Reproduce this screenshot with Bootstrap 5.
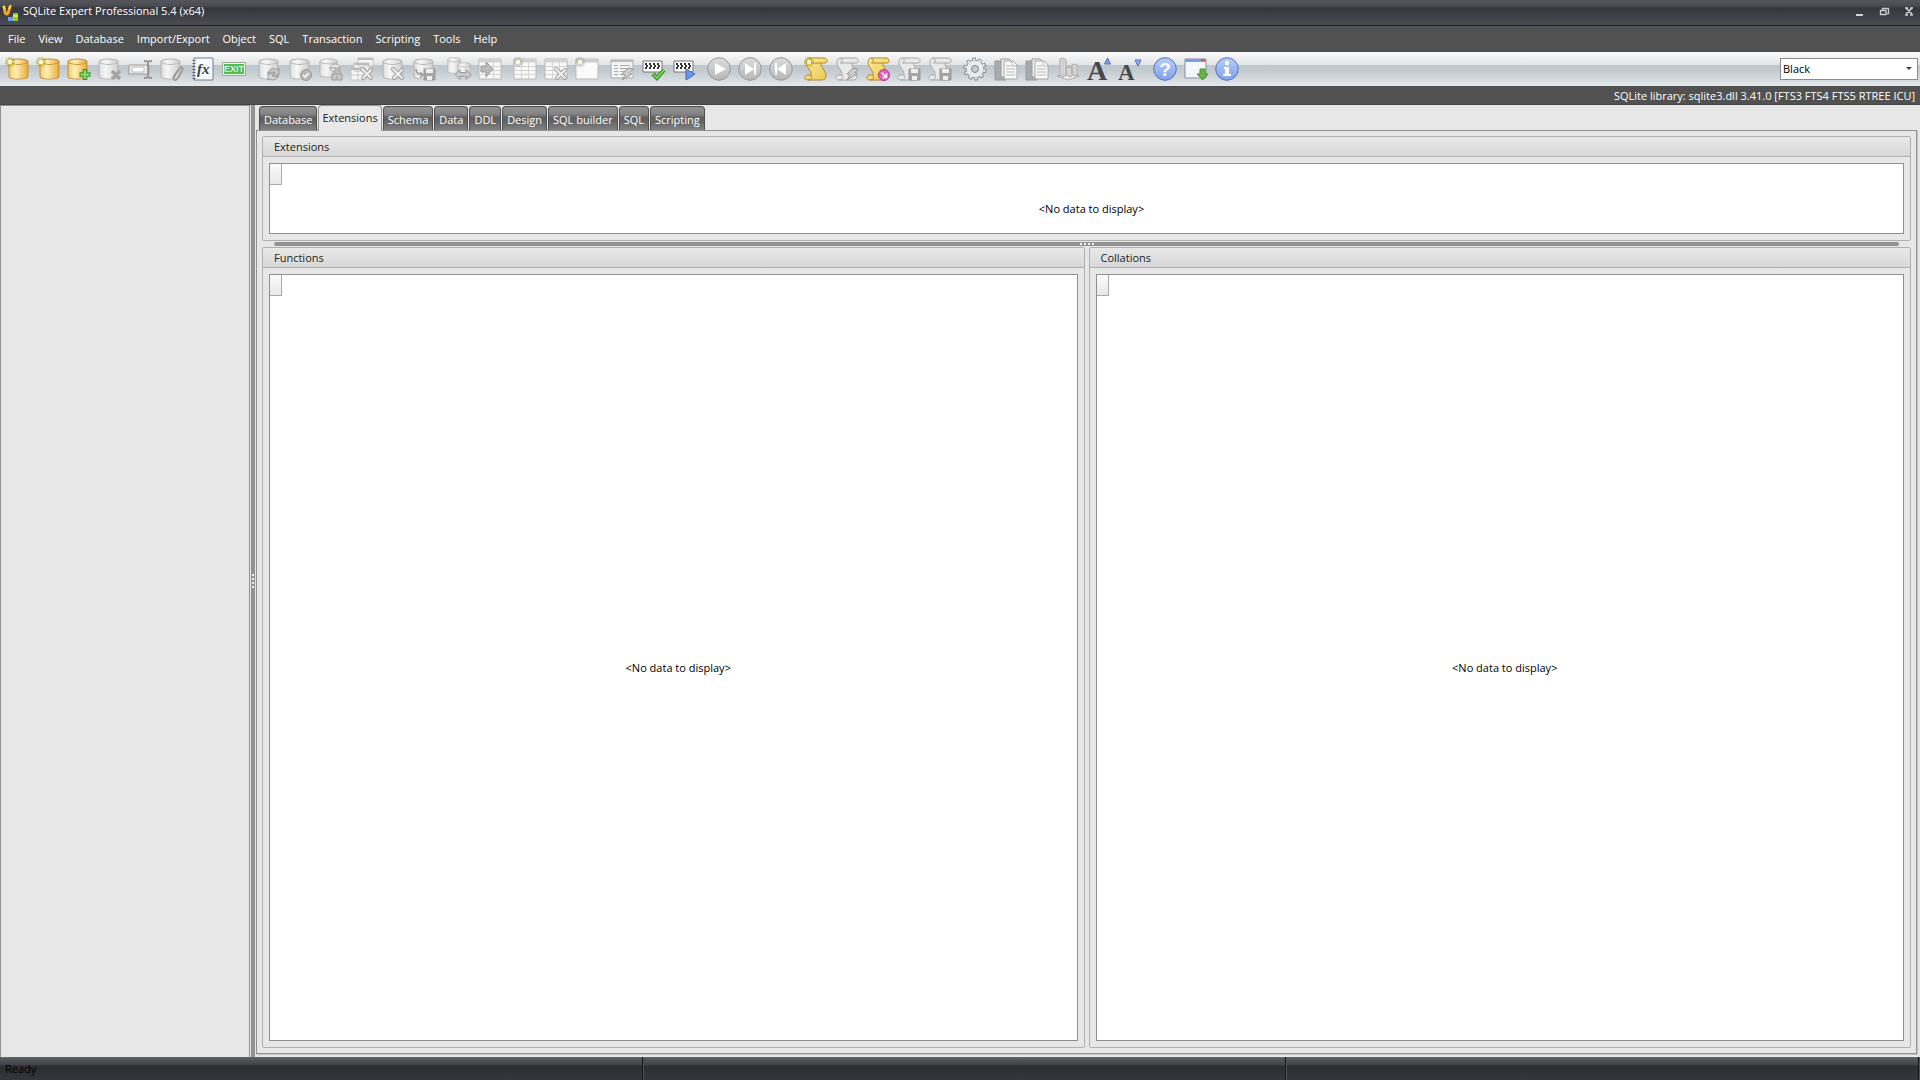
<!DOCTYPE html>
<html lang="en">
<head>
<meta charset="utf-8">
<meta name="viewport" content="width=device-width, initial-scale=1">
<title>SQLite Expert Professional 5.4 (x64)</title>
<link href="https://cdn.jsdelivr.net/npm/bootstrap@5.3.0/dist/css/bootstrap.min.css" rel="stylesheet">
<style>
body{font-family:"Open Sans","Noto Sans",sans-serif;font-size:11px;line-height:16px;color:#000;background:#e7e7e7}
button,select{font:inherit;color:inherit}
.plain-btn{background:none;border:0;padding:0}
.title-bar{height:26px;background:linear-gradient(#53555b 0,#4d4e54 20%,#36373c 32%,#42434a 70%,#4c4d55 94%,#232323 96%);color:#fff;padding:0 5px 0 2px}
.title-bar h1{font-size:11px;line-height:16px;font-weight:400;margin-left:3px}
.window-controls{gap:13px}
.menu-bar{height:26px;background:#515151;padding-left:8px;gap:13px}
.menu-bar a{color:#fff;text-decoration:none}
.tool-bar{height:34px;background:linear-gradient(#fafafa 0,#e2e5e7 37%,#bec5cc 38%,#c7cdd1 60%,#e4e9ec 100%);padding:0 2px 0 5px}
.tool-groups{gap:11px}
.tool-group{gap:7px}
.tool-group svg{width:24px;height:24px;display:block;overflow:visible}
.theme-select{width:138px;height:22px;border:1px solid #8d8d8d;border-radius:0;background:#fff;padding:0 2px;appearance:none;color:#000}
.theme-arrow{right:6px;top:9px;pointer-events:none}
.lib-bar{height:19px;background:#515151;border-bottom:1px solid #444;color:#fff;padding:2px 5px 0 0}
.main-area{min-height:0}
.side-pane{width:250px;border:1px solid #929292;border-bottom:0;background:#e7e7e7}
.split-v{width:4px;margin:0 1px;background:#929292;gap:2px}
.split-h{height:4px;margin:1px 12px;background:#929292;border-radius:2px;gap:2px}
.dot{width:2px;height:2px;background:#eee}
.tab-strip{padding:1px 0 0 3px;height:25px;gap:1px}
.doc-tab{height:25px;border:1px solid #4f4f4f;border-bottom:0;border-radius:4px 4px 0 0;color:#fff;background:linear-gradient(#929292 0,#838383 30%,#5e5e5e 45%,#686868 65%,#858585 100%);padding:2px 4px 0}
.doc-tab.active{height:26px;margin-top:-1px;background:#e9e9e9;color:#222;border-color:#929292;padding:0 3px 1px;position:relative;z-index:1}
.page-frame{border:1px solid #929292;padding:5px;margin-right:3px;margin-bottom:3px;box-shadow:1px 1px #c4c4c4}
.group-row{gap:4px}
.group-panel{border:1px solid #b0b0b0;border-radius:2px}
.group-panel h2{height:20px;margin:0;padding:1px 11px 0;font-size:11px;line-height:18px;font-weight:400;color:#222;border-bottom:1px solid #b0b0b0;background:linear-gradient(#e9e9e9,#d8d8d8)}
.grid-view{margin:6px;border:1px solid #8f8f8f;background:#fff;padding:20px 0 0 10px}
.grid-corner{left:0;top:0;width:12px;height:21px;border:1px solid #aaa;border-width:0 1px 1px 0;background:linear-gradient(#fbfbfb,#e8e8e8)}
.grid-short{height:71px}
.status-bar{height:23px;background:linear-gradient(#6a6b6e 0,#55565b 8%,#404147 35%,#2c2d31 38%,#35363c 100%)}
.status-cell{width:33.5%;padding:4px 5px;border-right:1px solid #17171a;box-shadow:1px 0 #505158}
.status-cell:last-child{width:auto;flex:1;margin-right:1px}
</style>
<script src="https://cdn.jsdelivr.net/npm/bootstrap@5.3.0/dist/js/bootstrap.bundle.min.js"></script>
</head>
<body class="vh-100 d-flex flex-column overflow-hidden">
<svg width="0" height="0" class="position-absolute" aria-hidden="true">
<defs>
<linearGradient id="gold"><stop offset="0" stop-color="#f4cd69"/><stop offset=".35" stop-color="#fff0b5"/><stop offset="1" stop-color="#e6ac3c"/></linearGradient>
<linearGradient id="silver"><stop offset="0" stop-color="#dedede"/><stop offset=".35" stop-color="#f7f7f7"/><stop offset="1" stop-color="#cfcfcf"/></linearGradient>
<linearGradient id="disc" x2="0" y2="1"><stop offset="0" stop-color="#ddd"/><stop offset="1" stop-color="#b4b6b8"/></linearGradient>
<linearGradient id="blue" x2="0" y2="1"><stop offset="0" stop-color="#b8cdf8"/><stop offset="1" stop-color="#7ea2ea"/></linearGradient>
<linearGradient id="scrollgold" x2="1" y2="1"><stop offset="0" stop-color="#fbeb9a"/><stop offset="1" stop-color="#ecc950"/></linearGradient>
<symbol id="cyl" viewBox="0 0 21 24" preserveAspectRatio="none"><path d="M1 4v16c0 4 18 4 18 0V4z"/><ellipse cx="10" cy="4" rx="9" ry="3"/></symbol>
<symbol id="star" viewBox="0 0 24 24"><path d="M5 0v10M0 5h10M1 1l8 8M9 1l-8 8M3 0l4 10M7 0L3 10M0 3l10 4M0 7l10-4" stroke-width=".7" fill="none"/><circle cx="5" cy="5" r="2.200" fill="#fffbe0" stroke="none"/></symbol>
<symbol id="scroll" viewBox="0 0 24 24"><path d="M5 1h15c4 0 4 5 1 5h-4c-1 4 5 8 5 13 0 2-1 4-4 4H4c-4 0-4-4-1-5h4c1-4-5-8-5-12 0-3 1-5 3-5z"/><path d="M5 1c3 1 3 5 0 5M4 23c4 0 4-3 3-5M6 6h11" fill="none"/></symbol>
<symbol id="tools" viewBox="0 0 24 24"><path d="M12 12l9 9M21 13l-8 8" stroke="#a2a2a2" stroke-width="4" stroke-linecap="round"/><path d="M12 12l9 9M21 13l-8 8" stroke="#f0f0f0" stroke-width="2" stroke-linecap="round"/></symbol>
<symbol id="table" viewBox="0 0 24 24"><path d="M1 2h22v20H1z" fill="#f9f9f9" stroke="#b8b8b8"/><path d="M1.500 2.500h21v3h-21z" fill="#d2d2d2"/><path d="M1 9.500h22M1 13.500h22M1 17.500h22M8.500 5v17M15.500 5v17" stroke="#d4d4d4" fill="none"/></symbol>
<symbol id="disk" viewBox="0 0 24 24"><path d="M12 12h11v11H12z" fill="#a5a5a5" stroke="#999"/><path d="M14 12h7v4h-7zM15 19h5v4h-5z" fill="#eee"/></symbol>
<symbol id="checker" viewBox="0 0 24 24"><path d="M2 4h19v11H2z" fill="#fff" stroke="#777"/><path d="M4 7h15M5 9h14M4 11h15" stroke="#333" stroke-width="2" stroke-dasharray="2 2"/></symbol>
<symbol id="flash" viewBox="0 0 24 24"><path d="M18 11l5 1-3 4 2 1-10 6 3-5-3-1z" fill="#ccc" stroke="#999"/></symbol>
<symbol id="pages" viewBox="0 0 24 24"><path d="M1 4h11v19H1z" fill="#a9acae" stroke="#989898"/><path d="M7 2h8l3 3v15H7z" fill="#eee" stroke="#999"/><path d="M10 4h9l4 4v14H10z" fill="#fafafa" stroke="#a8a8a8"/><path d="M18 4v5h5M12 9h5M12 12h9M12 15h9M12 18h9" fill="none" stroke="#b5b5b5"/></symbol>
</defs></svg>

<header class="title-bar d-flex align-items-center flex-shrink-0">
 <svg width="18" height="20" viewBox="0 0 18 20" class="flex-shrink-0"><path d="M1.500 3c2 2 0 7 3 8 3 0 2-6 4-8" fill="none" stroke="#f7a51c" stroke-width="3"/><path d="M1 3l2 3M9 2l-2 4" stroke="#ffda57" stroke-width="1.500"/><path d="M6 14h5v4H6z" fill="#6e9be8"/><path d="M11 10h5v8h-5z" fill="#93c51f"/><path d="M11 13h5" stroke="#d9ef52" stroke-width="2"/></svg>
 <h1 class="mb-0 flex-grow-1 pb-1">SQLite Expert Professional 5.4 (x64)</h1>
 <div class="window-controls d-flex pb-1">
  <button class="plain-btn" aria-label="Minimize"><svg width="12" height="12" class="d-block"><path d="M3 10h7" stroke="#d0d3d6" stroke-width="2"/></svg></button>
  <button class="plain-btn" aria-label="Restore"><svg width="12" height="12" class="d-block"><path d="M4.500 5V3.500h6v5H9M2.500 5.500H8v4H2.500z" fill="none" stroke="#c9cccf" stroke-width="1.300"/></svg></button>
  <button class="plain-btn" aria-label="Close"><svg width="12" height="12" class="d-block"><path d="M3 3l6 6M9 3L3 9M2 3h3M7 3h3M2 10h3M7 10h3" stroke="#c9cccf" stroke-width="1.700"/></svg></button>
 </div>
</header>
<nav class="menu-bar d-flex align-items-center flex-shrink-0" aria-label="Main menu">
 <a href="#">File</a><a href="#">View</a><a href="#">Database</a><a href="#">Import/Export</a><a href="#">Object</a><a href="#">SQL</a><a href="#">Transaction</a><a href="#">Scripting</a><a href="#">Tools</a><a href="#">Help</a>
</nav>
<div class="tool-bar d-flex align-items-center flex-shrink-0" role="toolbar" aria-label="Tools">
 <div class="tool-groups d-flex flex-grow-1">
 <div class="tool-group d-flex">
  <button class="plain-btn" aria-label="New database"><svg viewBox="0 0 24 24"><use href="#cyl" x="3" y="1" width="22" height="22" fill="url(#gold)" stroke="#c78d37"/><use href="#star" width="24" height="24" stroke="#b4a31d"/></svg></button>
  <button class="plain-btn" aria-label="New in-memory database"><svg viewBox="0 0 24 24"><use href="#cyl" x="3" y="1" width="22" height="22" fill="url(#gold)" stroke="#c78d37"/><use href="#star" width="24" height="24" stroke="#b4a31d"/></svg></button>
  <button class="plain-btn" aria-label="Open database"><svg viewBox="0 0 24 24"><use href="#cyl" y="1" width="22" height="22" fill="url(#gold)" stroke="#c78d37"/><path d="M18 12v11M12.500 17.500h11" stroke="#398d2d" stroke-width="4.500"/><path d="M18 13v9M13.500 17.500h9" stroke="#7fdb62" stroke-width="2.500"/></svg></button>
  <button class="plain-btn" aria-label="Close database"><svg viewBox="0 0 24 24"><use href="#cyl" y="1" width="22" height="22" fill="url(#silver)" stroke="#b5b5b5"/><path d="M14 14l8 8M22 14l-8 8" stroke="#a4a4a4" stroke-width="3.500"/></svg></button>
  <button class="plain-btn" aria-label="Rename"><svg viewBox="0 0 24 24"><path d="M0 8h20v9H0z" fill="#eee" stroke="#999"/><path d="M3 10h12v5H3z" fill="#fff" stroke="#bbb"/><path d="M15 4c2 0 3 0 4 1 1-1 2-1 4-1M19 5v15M15 21c2 0 3 0 4-1 1 1 2 1 4 1" stroke="#999" stroke-width="2" fill="none"/></svg></button>
  <button class="plain-btn" aria-label="Attach database"><svg viewBox="0 0 24 24"><use href="#cyl" y="1" width="22" height="22" fill="url(#silver)" stroke="#b5b5b5"/><path d="M14 20l5-8c2-3 5-1 3 2l-5 8c-2 3-5 0-3-3l4-6" fill="none" stroke="#999" stroke-width="1.600"/></svg></button>
  <button class="plain-btn" aria-label="Functions"><svg viewBox="0 0 24 24"><path d="M3 1h19v22H3z" fill="#f5f8fc" stroke="#77818c"/><path d="M3 3v20" stroke="#566" stroke-width="3" stroke-dasharray="1 2"/><text x="6" y="17" font-family="Liberation Serif,serif" font-style="italic" font-weight="700" font-size="15" fill="#344">fx</text></svg></button>
  <button class="plain-btn" aria-label="Exit"><svg viewBox="0 0 24 24"><path d="M.5 5.500h23v13H.5z" fill="#eafbe8" stroke="#9cab9c"/><path d="M2 7h20v10H2z" fill="#55bd4b"/><text x="2" y="15" font-family="Liberation Sans,sans-serif" font-size="9" fill="#fff">EXIT</text></svg></button>
 </div>
 <div class="tool-group d-flex">
  <button class="plain-btn" aria-label="Refresh"><svg viewBox="0 0 24 24"><use href="#cyl" x="1" y="1" width="22" height="22" fill="url(#silver)" stroke="#b5b5b5"/><path d="M10 16l4-4c3-2 6 1 6 1l2-2v7h-6l2-2-3-1-2 1z" fill="#c6c6c6" stroke="#999"/><path d="M22 19l-3 3c-3 2-6 0-6 0l-2 1v-6h6l-2 2 3 1z" fill="#d6d6d6" stroke="#999"/></svg></button>
  <button class="plain-btn" aria-label="Check"><svg viewBox="0 0 24 24"><use href="#cyl" x="1" y="1" width="22" height="22" fill="url(#silver)" stroke="#b5b5b5"/><circle cx="18" cy="18" r="5.500" fill="#b8b8b8" stroke="#999"/><path d="M15 18l2 2 4-4" fill="none" stroke="#fff" stroke-width="1.600"/></svg></button>
  <button class="plain-btn" aria-label="Encrypt"><svg viewBox="0 0 24 24"><use href="#cyl" y="1" width="20" height="20" fill="url(#silver)" stroke="#b5b5b5"/><ellipse cx="16" cy="11" rx="5" ry="4" fill="#e8e8e8" stroke="#aaa"/><path d="M11 11h10M13 23v-6h10v6z" fill="#c7c7c7" stroke="#999"/><path d="M15 17c0-6 6-6 6 0M18 19v3" fill="none" stroke="#aaa" stroke-width="1.500"/></svg></button>
  <button class="plain-btn" aria-label="Repair tables"><svg viewBox="0 0 24 24"><path d="M8 1h15v8H8zM4 6h15v8H4zM1 11h15v12H1z" fill="#f7f7f7" stroke="#c4c4c4"/><path d="M8 2h15M4 7h15M1 12h15" stroke="#bdbdbd" stroke-width="2"/><path d="M1 18h15M8 12v11" stroke="#ccc"/><use href="#tools" width="24" height="24"/></svg></button>
  <button class="plain-btn" aria-label="Repair"><svg viewBox="0 0 24 24"><use href="#cyl" x="1" y="1" width="22" height="22" fill="url(#silver)" stroke="#b5b5b5"/><use href="#tools" width="24" height="24"/></svg></button>
  <button class="plain-btn" aria-label="Backup"><svg viewBox="0 0 24 24"><use href="#cyl" x="1" y="1" width="22" height="22" fill="url(#silver)" stroke="#b5b5b5"/><path d="M4 12c0 5 3 6 7 6M8 15l3 3-3 3" fill="none" stroke="#999" stroke-width="1.500"/><use href="#disk" width="24" height="24"/></svg></button>
 </div>
 <div class="tool-group d-flex">
  <button class="plain-btn" aria-label="Transfer"><svg viewBox="0 0 24 24"><use href="#cyl" width="15" height="17" fill="url(#silver)" stroke="#b5b5b5"/><use href="#cyl" x="10" y="5" width="15" height="17" fill="url(#silver)" stroke="#b5b5b5"/><path d="M8 17.500l5-5v3h6v-3l5 5-5 5v-3h-6v3z" fill="#c9c9c9" stroke="#979797"/></svg></button>
  <button class="plain-btn" aria-label="Import"><svg viewBox="0 0 24 24"><use href="#table" width="24" height="24"/><path d="M3 9h5V5l7 7-7 8v-5H3z" fill="#bbb" stroke="#999"/></svg></button>
 </div>
 <div class="tool-group d-flex">
  <button class="plain-btn" aria-label="New table"><svg viewBox="0 0 24 24"><use href="#table" width="24" height="24"/><use href="#star" width="24" height="24" stroke="#aaa"/></svg></button>
  <button class="plain-btn" aria-label="Design table"><svg viewBox="0 0 24 24"><use href="#table" width="24" height="24"/><use href="#tools" width="24" height="24"/></svg></button>
  <button class="plain-btn" aria-label="New view"><svg viewBox="0 0 24 24"><path d="M1 2h22v20H1z" fill="#fbfbfb" stroke="#bbb"/><path d="M1 4h22" stroke="#ccc" stroke-width="3"/><use href="#star" width="24" height="24" stroke="#aaa"/></svg></button>
 </div>
 <div class="tool-group d-flex">
  <button class="plain-btn" aria-label="Execute form"><svg viewBox="0 0 24 24"><path d="M1 3h22v18H1z" fill="#f4f4f4" stroke="#aaa"/><path d="M1 4h22" stroke="#bbb" stroke-width="2"/><path d="M4 8.500h4M10 8.500h10M4 11.500h4M10 11.500h10M4 14.500h4M10 14.500h10M4 17.500h4M10 17.500h10" stroke="#aaa"/><use href="#flash" width="24" height="24"/></svg></button>
  <button class="plain-btn" aria-label="Commit"><svg viewBox="0 0 24 24"><use href="#checker" width="24" height="24"/><path d="M12 17l4 4 7-8" fill="none" stroke="#2f8424" stroke-width="4"/><path d="M12 17l4 4 7-8" fill="none" stroke="#6ed351" stroke-width="2"/></svg></button>
  <button class="plain-btn" aria-label="Run"><svg viewBox="0 0 24 24"><use href="#checker" width="24" height="24"/><path d="M14 12l9 5-9 6z" fill="#6d97ee" stroke="#4266b5"/></svg></button>
 </div>
 <div class="tool-group d-flex">
  <button class="plain-btn" aria-label="Start"><svg viewBox="0 0 24 24"><circle cx="12" cy="12" r="11.300" fill="url(#disc)" stroke="#999"/><path d="M8 6l11 6-11 6z" fill="#fff"/></svg></button>
  <button class="plain-btn" aria-label="Step forward"><svg viewBox="0 0 24 24"><circle cx="12" cy="12" r="11.300" fill="url(#disc)" stroke="#999"/><path d="M7 6l9 6-9 6zM16 6h2v12h-2z" fill="#fff"/></svg></button>
  <button class="plain-btn" aria-label="Step back"><svg viewBox="0 0 24 24"><circle cx="12" cy="12" r="11.300" fill="url(#disc)" stroke="#999"/><path d="M17 6l-9 6 9 6zM6 6h2v12H6z" fill="#fff"/></svg></button>
 </div>
 <div class="tool-group d-flex">
  <button class="plain-btn" aria-label="New script"><svg viewBox="0 0 24 24"><use href="#scroll" width="24" height="24" fill="url(#scrollgold)" stroke="#b08a35"/><use href="#star" width="24" height="24" stroke="#b4a31d"/></svg></button>
  <button class="plain-btn" aria-label="Execute script"><svg viewBox="0 0 24 24"><use href="#scroll" width="24" height="24" fill="#e9e9e9" stroke="#a6a6a6"/><use href="#flash" width="24" height="24"/></svg></button>
  <button class="plain-btn" aria-label="Load script"><svg viewBox="0 0 24 24"><use href="#scroll" width="24" height="24" fill="url(#scrollgold)" stroke="#b08a35"/><circle cx="18" cy="18" r="5.500" fill="#df62c4" stroke="#b33e9b"/><path d="M15.500 15.500l5 5M20.500 16.500v4h-4" fill="none" stroke="#fff" stroke-width="1.500"/></svg></button>
  <button class="plain-btn" aria-label="Save script"><svg viewBox="0 0 24 24"><use href="#scroll" width="24" height="24" fill="#e9e9e9" stroke="#aaa"/><use href="#disk" width="24" height="24"/></svg></button>
  <button class="plain-btn" aria-label="Save script as"><svg viewBox="0 0 24 24"><use href="#scroll" width="24" height="24" fill="#e9e9e9" stroke="#aaa"/><use href="#disk" width="24" height="24"/></svg></button>
 </div>
 <div class="tool-group d-flex">
  <button class="plain-btn" aria-label="Options"><svg viewBox="0 0 24 24"><circle cx="12" cy="12" r="9.500" fill="none" stroke="#7d858d" stroke-width="4" stroke-dasharray="3.500 2.470"/><circle cx="12" cy="12" r="9" fill="#e8edf1" stroke="#7d858d"/><circle cx="12" cy="12" r="9.500" fill="none" stroke="#e8edf1" stroke-width="2" stroke-dasharray="2.500 3.470" stroke-dashoffset="-.5"/><circle cx="12" cy="12" r="3.500" fill="#c8ced3" stroke="#7d858d"/></svg></button>
  <button class="plain-btn" aria-label="Copy"><svg viewBox="0 0 24 24"><use href="#pages" width="24" height="24"/></svg></button>
  <button class="plain-btn" aria-label="Paste"><svg viewBox="0 0 24 24"><use href="#pages" width="24" height="24"/></svg></button>
  <button class="plain-btn" aria-label="Chart"><svg viewBox="0 0 24 24"><path d="M1 19l10-3 12 3-11 4z" fill="#eee" stroke="#aaa"/><path d="M4 2l3-1 3 2v15l-3 2-3-2zM10 11l3-1 3 1v8l-3 1-3-2zM16 8l2-1 3 1v10l-3 1-2-2z" fill="#dadada" stroke="#a9a9a9"/><path d="M7 3v16M13 12v8M18 9v9" stroke="#c4c4c4"/></svg></button>
  <button class="plain-btn" aria-label="Increase font size"><svg viewBox="0 0 24 24"><text x="0" y="23" font-family="Liberation Serif,serif" font-weight="700" font-size="28" fill="#44484d">A</text><path d="M17.500 7h6l-3-6z" fill="#7c9ee7" stroke="#4d70b9"/></svg></button>
  <button class="plain-btn" aria-label="Decrease font size"><svg viewBox="0 0 24 24"><text x="0" y="23" font-family="Liberation Serif,serif" font-weight="700" font-size="23" fill="#44484d">A</text><path d="M17 3h6l-3 6z" fill="#8faef0" stroke="#4d70b9"/></svg></button>
 </div>
 <div class="tool-group d-flex">
  <button class="plain-btn" aria-label="Help"><svg viewBox="0 0 24 24"><circle cx="12" cy="12" r="11.300" fill="url(#blue)" stroke="#5675b8"/><text x="12" y="19" text-anchor="middle" font-family="Liberation Sans,sans-serif" font-weight="700" font-size="19" fill="#fff">?</text></svg></button>
  <button class="plain-btn" aria-label="Check for updates"><svg viewBox="0 0 24 24"><path d="M1 2h21v19H1z" fill="#f4f8fc" stroke="#8792a2"/><path d="M1 2h21v3H1z" fill="#77a0e7"/><path d="M17 2h4v2h-4z" fill="#df5542"/><path d="M16 12h5v5h3l-5.500 6-5.500-6h3z" fill="#65b842" stroke="#4c8939"/></svg></button>
  <button class="plain-btn" aria-label="About"><svg viewBox="0 0 24 24"><circle cx="12" cy="12" r="11.300" fill="url(#blue)" stroke="#5675b8"/><circle cx="12" cy="6" r="2.200" fill="#fff"/><path d="M9 10h5v7h2v2H8v-2h2v-5H9z" fill="#fff"/></svg></button>
 </div>
 </div>
 <div class="position-relative">
  <select class="theme-select d-block" aria-label="Theme"><option>Black</option></select>
  <svg class="theme-arrow position-absolute" width="6" height="4"><path d="M0 0h6L3 3z" fill="#444"/></svg>
 </div>
</div>
<div class="lib-bar text-end flex-shrink-0">SQLite library: sqlite3.dll 3.41.0 [FTS3 FTS4 FTS5 RTREE ICU]</div>

<main class="main-area d-flex flex-grow-1">
 <aside class="side-pane flex-shrink-0"></aside>
 <div class="split-v d-flex flex-column align-items-center justify-content-center flex-shrink-0"><i class="dot"></i><i class="dot"></i><i class="dot"></i><i class="dot"></i></div>
 <div class="d-flex flex-column flex-grow-1">
  <div class="tab-strip d-flex flex-shrink-0" role="tablist">
   <button class="doc-tab" role="tab">Database</button><button class="doc-tab active" role="tab" aria-selected="true">Extensions</button><button class="doc-tab" role="tab">Schema</button><button class="doc-tab" role="tab">Data</button><button class="doc-tab" role="tab">DDL</button><button class="doc-tab" role="tab">Design</button><button class="doc-tab" role="tab">SQL builder</button><button class="doc-tab" role="tab">SQL</button><button class="doc-tab" role="tab">Scripting</button>
  </div>
  <div class="page-frame d-flex flex-column flex-grow-1">
   <section class="group-panel">
    <h2>Extensions</h2>
    <div class="grid-view grid-short position-relative d-flex align-items-center justify-content-center"><span class="grid-corner position-absolute"></span>&lt;No data to display&gt;</div>
   </section>
   <div class="split-h d-flex align-items-center justify-content-center flex-shrink-0"><i class="dot"></i><i class="dot"></i><i class="dot"></i><i class="dot"></i></div>
   <div class="group-row d-flex flex-grow-1">
    <section class="group-panel d-flex flex-column flex-fill w-50">
     <h2>Functions</h2>
     <div class="grid-view position-relative d-flex align-items-center justify-content-center flex-grow-1"><span class="grid-corner position-absolute"></span>&lt;No data to display&gt;</div>
    </section>
    <section class="group-panel d-flex flex-column flex-fill w-50">
     <h2>Collations</h2>
     <div class="grid-view position-relative d-flex align-items-center justify-content-center flex-grow-1"><span class="grid-corner position-absolute"></span>&lt;No data to display&gt;</div>
    </section>
   </div>
  </div>
 </div>
</main>
<footer class="status-bar d-flex flex-shrink-0"><div class="status-cell">Ready</div><div class="status-cell"></div><div class="status-cell"></div></footer>
</body>
</html>
